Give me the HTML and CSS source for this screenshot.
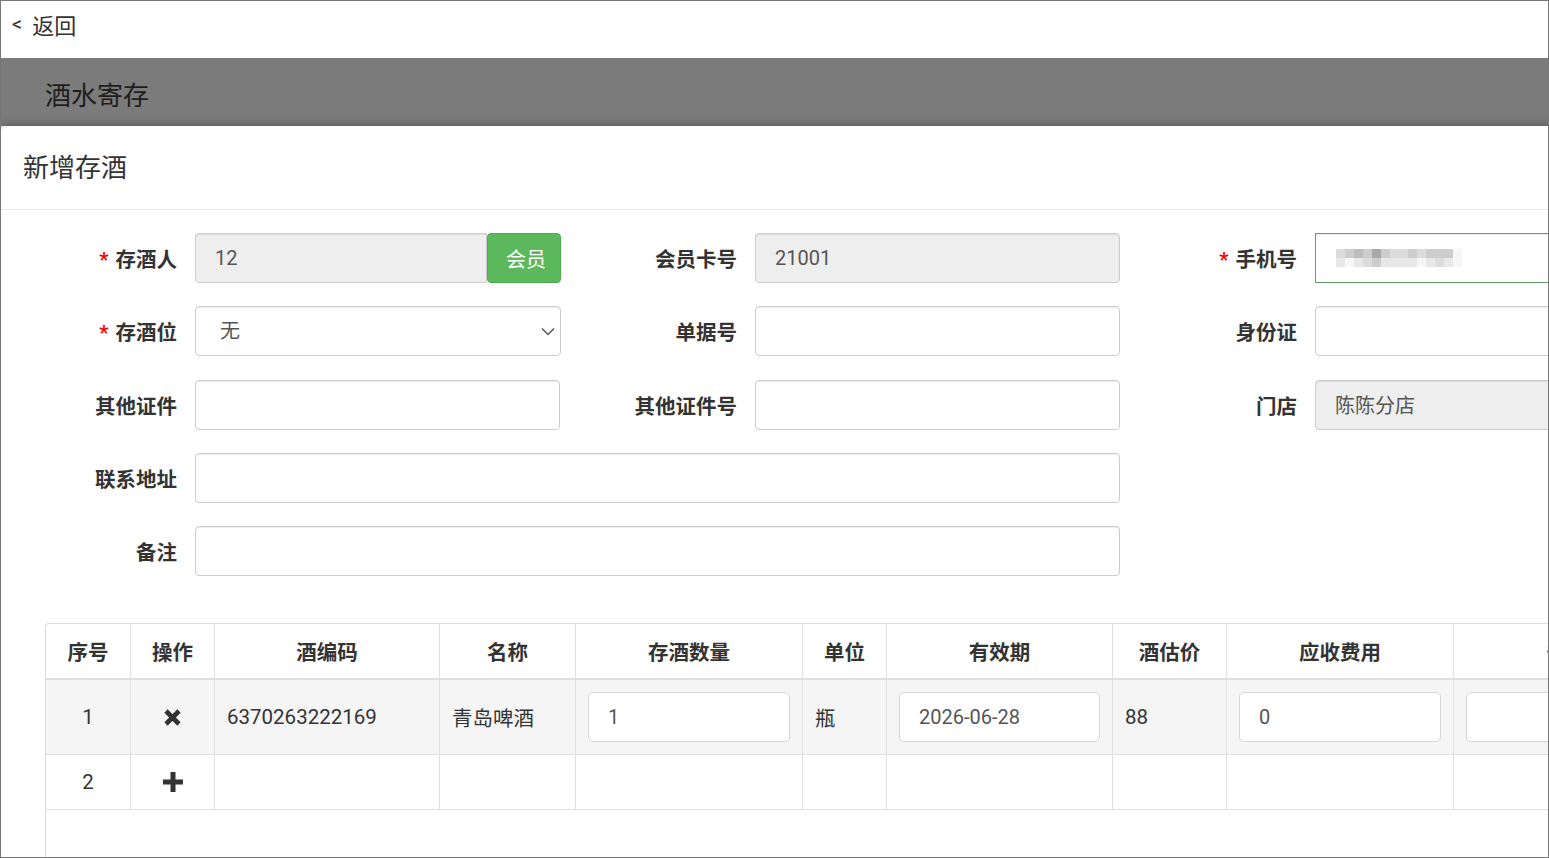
FILE: index.html
```html
<!DOCTYPE html>
<html lang="zh-CN">
<head>
  <meta charset="UTF-8" />
  <meta name="viewport" content="width=device-width, initial-scale=1.0"/>
  <title>酒水寄存</title>
  <link rel="stylesheet" href="styles.css">
</head>
<body>
  <div class="frame">
    <div class="topbar"><span class="back-arrow">&lt;</span>返回</div>
    <div class="page-title">酒水寄存</div>

    <div class="modal">
      <div class="modal-header">新增存酒</div>
      <div class="modal-body">
        <div class="form-grid">
          <div class="field">
            <label><span class="req">*</span>存酒人</label>
            <div class="input-group">
              <input class="form-control" type="text" value="12" readonly>
              <button class="btn-member">会员</button>
            </div>
          </div>
          <div class="field">
            <label>会员卡号</label>
            <input class="form-control" type="text" value="21001" readonly>
          </div>
          <div class="field">
            <label><span class="req">*</span>手机号</label>
            <div class="form-control success">
              <div class="mosaic">
                <span class="m2"></span><span class="m3"></span><span class="m4"></span><span class="m3"></span><span class="m5"></span><span class="m3"></span><span class="m2"></span><span class="m2"></span><span class="m3"></span><span class="m2"></span><span class="m3"></span><span class="m3"></span><span class="m3"></span><span class="m0"></span>
                <span class="m1"></span><span class="m0"></span><span class="m1"></span><span class="m2"></span><span class="m3"></span><span class="m1"></span><span class="m1"></span><span class="m1"></span><span class="m1"></span><span class="m0"></span><span class="m1"></span><span class="m2"></span><span class="m1"></span><span class="m0"></span>
              </div>
            </div>
          </div>

          <div class="field">
            <label><span class="req">*</span>存酒位</label>
            <div class="select-wrap">
              <select class="form-control">
                <option>无</option>
              </select>
              <svg class="caret" width="14" height="9" viewBox="0 0 14 9"><path d="M1 1.5l6 6 6-6" fill="none" stroke="#555" stroke-width="1.5"/></svg>
            </div>
          </div>
          <div class="field">
            <label>单据号</label>
            <input class="form-control" type="text">
          </div>
          <div class="field">
            <label>身份证</label>
            <input class="form-control" type="text">
          </div>

          <div class="field">
            <label>其他证件</label>
            <input class="form-control" type="text">
          </div>
          <div class="field">
            <label>其他证件号</label>
            <input class="form-control" type="text">
          </div>
          <div class="field">
            <label>门店</label>
            <input class="form-control" type="text" value="陈陈分店" readonly>
          </div>

          <div class="field wide">
            <label>联系地址</label>
            <input class="form-control" type="text">
          </div>
          <div class="field wide">
            <label>备注</label>
            <input class="form-control" type="text">
          </div>
        </div>

        <div class="table-wrap">
          <table class="wine-table">
            <colgroup>
              <col class="c-no"><col class="c-op"><col class="c-code"><col class="c-name"><col class="c-qty">
              <col class="c-unit"><col class="c-date"><col class="c-price"><col class="c-fee"><col class="c-note">
            </colgroup>
            <thead>
              <tr>
                <th>序号</th><th>操作</th><th>酒编码</th><th>名称</th><th>存酒数量</th>
                <th>单位</th><th>有效期</th><th>酒估价</th><th>应收费用</th><th>备注</th>
              </tr>
            </thead>
            <tbody>
              <tr class="filled">
                <td class="center">1</td>
                <td class="center">
                  <svg width="19" height="19" viewBox="0 0 19 19"><path d="M3 3l13 13M16 3L3 16" stroke="#333" stroke-width="4.6"/></svg>
                </td>
                <td>6370263222169</td>
                <td>青岛啤酒</td>
                <td><input class="cell-input" type="text" value="1"></td>
                <td>瓶</td>
                <td><input class="cell-input" type="text" value="2026-06-28"></td>
                <td>88</td>
                <td><input class="cell-input" type="text" value="0"></td>
                <td><input class="cell-input" type="text"></td>
              </tr>
              <tr class="empty">
                <td class="center">2</td>
                <td class="center">
                  <svg width="20" height="20" viewBox="0 0 20 20"><path d="M10 0v20M0 10h20" stroke="#333" stroke-width="5"/></svg>
                </td>
                <td></td><td></td><td></td><td></td><td></td><td></td><td></td><td></td>
              </tr>
            </tbody>
          </table>
        </div>
      </div>
    </div>
  </div>
</body>
</html>
```

FILE: styles.css
```css
* { box-sizing: border-box; }
html, body { margin: 0; padding: 0; }
body { font-family: Roboto, "Noto Sans CJK SC", sans-serif; color: #333; overflow: hidden; background: #fff; }

.frame { width: 1549px; height: 858px; border: 1px solid #777; overflow: hidden; background: #fff; }
.topbar { height: 57px; display: flex; align-items: center; padding: 0 0 11px 11px; font-size: 22px; color: #333; background: #fff; }
.back-arrow { font-size: 20px; margin-right: 10px; }
.page-title { height: 68px; background: #7b7b7b; padding: 2px 0 0 44px; display: flex; align-items: center; font-size: 26px; color: #1e1e1e; }

.modal { width: 1760px; height: 800px; background: #fff; border-radius: 6px 6px 0 0; box-shadow: 0 -2px 8px rgba(0,0,0,0.25); }
.modal-header { height: 84px; padding: 0 22px 5px; display: flex; align-items: center; font-size: 26px; color: #333; border-bottom: 1px solid #e8e8e8; }
.modal-body { padding-top: 23px; }

.form-grid { display: grid; grid-template-columns: repeat(3, 560px); row-gap: 23.25px; }
.field { display: flex; align-items: center; gap: 18px; }
.field label { width: 176px; flex: none; text-align: right; font-size: 20.5px; font-weight: bold; color: #333; }
.field.wide { grid-column: span 2; }
.field.wide .form-control { width: auto; flex: 1; margin-right: 1px; }
.req { color: #f00; margin-right: 7px; }

.form-control { width: 365px; height: 50px; border: 1px solid #ccc; border-radius: 4px; padding: 0 19px; font-family: inherit; font-size: 20px; color: #555; background: #fff; box-shadow: inset 0 1px 1px rgba(0,0,0,0.075); outline: none; }
.form-control[readonly] { background: #eee; }
.form-control.success { border-color: #62a062; border-radius: 0; display: flex; align-items: center; padding-left: 20px; }

.input-group { display: flex; width: 366px; }
.input-group .form-control { width: 292px; border-radius: 4px 0 0 4px; }
.btn-member { width: 74px; height: 50px; border: 1px solid #4cae4c; border-radius: 4px; background: #5cb85c; color: #fff; font-family: inherit; font-size: 20px; padding: 0 0 0 4px; }

.select-wrap { position: relative; width: 366px; }
.select-wrap select { width: 100%; appearance: none; -webkit-appearance: none; padding-left: 24px; }
.select-wrap .caret { position: absolute; right: 6px; top: 21px; }

.mosaic { display: grid; grid-template-columns: repeat(14, 9px); grid-auto-rows: 9px; }
.m0 { background: #f6f6f6; }
.m1 { background: #e8e8e8; }
.m2 { background: #dcdcdc; }
.m3 { background: #cdcdcd; }
.m4 { background: #bdbdbd; }
.m5 { background: #a9a9a9; }

.table-wrap { margin: 47px 0 0 44px; height: 300px; border: 1px solid #ddd; border-right: none; border-radius: 4px 0 0 0; }
.wine-table { border-collapse: separate; border-spacing: 0; table-layout: fixed; width: 1635px; font-size: 20.5px; color: #333; }
.c-no { width: 85px; }
.c-op { width: 84px; }
.c-code { width: 225px; }
.c-name { width: 136px; }
.c-qty { width: 227px; }
.c-unit { width: 84px; }
.c-date { width: 226px; }
.c-price { width: 114px; }
.c-fee { width: 227px; }
.c-note { width: 227px; }
.wine-table th, .wine-table td { border-right: 1px solid #e0e0e0; border-bottom: 1px solid #e0e0e0; padding: 0 12px; text-align: left; }
.wine-table th { height: 56px; border-bottom-width: 2px; text-align: center; font-weight: bold; }
.wine-table td.center { text-align: center; }
.wine-table td svg { display: block; margin: 0 auto; }
.filled td { height: 75px; background: #f5f5f5; }
.empty td { height: 55px; background: #fff; }
.cell-input { width: 100%; height: 50px; border: 1px solid #d6d6d6; border-radius: 5px; padding: 0 19px; font-family: inherit; font-size: 20px; color: #555; background: #fff; outline: none; }
```
